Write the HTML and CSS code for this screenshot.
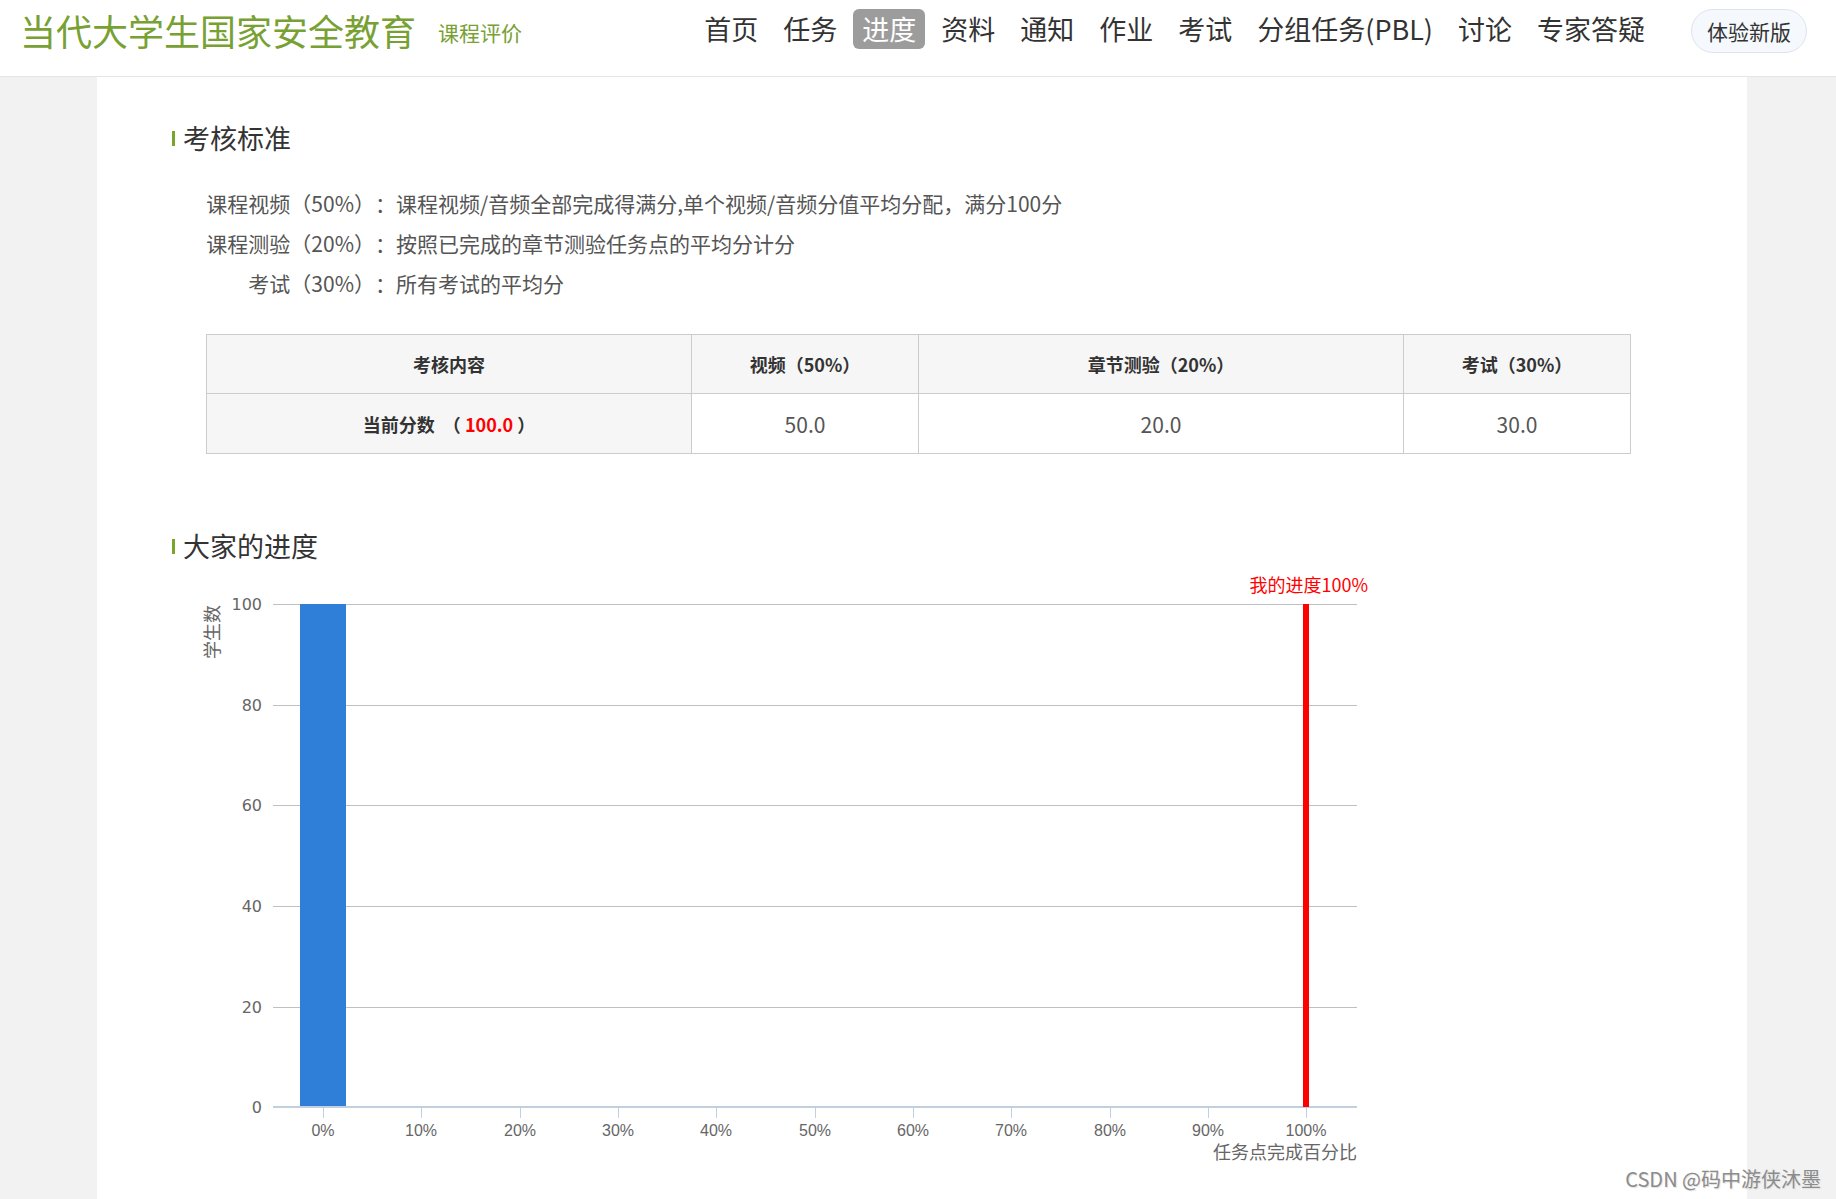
FILE: index.html
```html
<!DOCTYPE html>
<html lang="zh-CN">
<head>
<meta charset="utf-8">
<title>课程评价 - 进度</title>
<link rel="stylesheet" href="styles.css">
</head>
<body>
<header class="topbar">
  <div class="brand">
    <span class="brand-title">当代大学生国家安全教育</span>
    <span class="brand-sub">课程评价</span>
  </div>
  <nav class="nav">
    <a class="nav-item">首页</a>
    <a class="nav-item">任务</a>
    <a class="nav-item active">进度</a>
    <a class="nav-item">资料</a>
    <a class="nav-item">通知</a>
    <a class="nav-item">作业</a>
    <a class="nav-item">考试</a>
    <a class="nav-item">分组任务(PBL)</a>
    <a class="nav-item">讨论</a>
    <a class="nav-item">专家答疑</a>
  </nav>
  <a class="new-btn">体验新版</a>
</header>

<main class="page">
  <section class="block">
    <h2 class="block-title">考核标准</h2>
    <div class="block-body">
      <div class="rules">
        <div class="rule"><span class="rule-label">课程视频（50%）：</span><span class="rule-text">课程视频/音频全部完成得满分,单个视频/音频分值平均分配，满分100分</span></div>
        <div class="rule"><span class="rule-label">课程测验（20%）：</span><span class="rule-text">按照已完成的章节测验任务点的平均分计分</span></div>
        <div class="rule"><span class="rule-label">考试（30%）：</span><span class="rule-text">所有考试的平均分</span></div>
      </div>
      <table class="score">
        <colgroup>
          <col class="col-wide">
          <col class="col-narrow">
          <col class="col-wide">
          <col class="col-narrow">
        </colgroup>
        <thead>
          <tr>
            <th>考核内容</th>
            <th>视频（50%）</th>
            <th>章节测验（20%）</th>
            <th>考试（30%）</th>
          </tr>
        </thead>
        <tbody>
          <tr>
            <td class="row-head">当前分数 &nbsp;（ <span class="total">100.0</span> ）</td>
            <td>50.0</td>
            <td>20.0</td>
            <td>30.0</td>
          </tr>
        </tbody>
      </table>
    </div>
  </section>

  <section class="block block-chart">
    <h2 class="block-title">大家的进度</h2>
    <svg class="chart" width="1220" height="625" viewBox="0 0 1220 625" xmlns="http://www.w3.org/2000/svg">
      <g class="grid">
        <line x1="101" x2="1185" y1="38.5" y2="38.5"/>
        <line x1="101" x2="1185" y1="139.5" y2="139.5"/>
        <line x1="101" x2="1185" y1="239.5" y2="239.5"/>
        <line x1="101" x2="1185" y1="340.5" y2="340.5"/>
        <line x1="101" x2="1185" y1="441.5" y2="441.5"/>
      </g>
      <g class="ylabels">
        <text x="90" y="44">100</text>
        <text x="90" y="145">80</text>
        <text x="90" y="245">60</text>
        <text x="90" y="346">40</text>
        <text x="90" y="447">20</text>
        <text x="90" y="547">0</text>
      </g>
      <text class="axis-title" transform="translate(39,66) rotate(-90)">学生数</text>
      <rect class="bar" x="128" y="38" width="46" height="503"/>
      <line class="xaxis" x1="101" x2="1185" y1="541" y2="541"/>
      <g class="ticks">
        <line x1="151.5" x2="151.5" y1="542" y2="552"/>
        <line x1="249.5" x2="249.5" y1="542" y2="552"/>
        <line x1="348.5" x2="348.5" y1="542" y2="552"/>
        <line x1="446.5" x2="446.5" y1="542" y2="552"/>
        <line x1="544.5" x2="544.5" y1="542" y2="552"/>
        <line x1="643.5" x2="643.5" y1="542" y2="552"/>
        <line x1="741.5" x2="741.5" y1="542" y2="552"/>
        <line x1="839.5" x2="839.5" y1="542" y2="552"/>
        <line x1="938.5" x2="938.5" y1="542" y2="552"/>
        <line x1="1036.5" x2="1036.5" y1="542" y2="552"/>
        <line x1="1134.5" x2="1134.5" y1="542" y2="552"/>
      </g>
      <g class="xlabels">
        <text x="151" y="570">0%</text>
        <text x="249" y="570">10%</text>
        <text x="348" y="570">20%</text>
        <text x="446" y="570">30%</text>
        <text x="544" y="570">40%</text>
        <text x="643" y="570">50%</text>
        <text x="741" y="570">60%</text>
        <text x="839" y="570">70%</text>
        <text x="938" y="570">80%</text>
        <text x="1036" y="570">90%</text>
        <text x="1134" y="570">100%</text>
      </g>
      <text class="x-title" x="1185" y="593">任务点完成百分比</text>
      <rect class="mine" x="1131" y="38" width="6" height="503"/>
      <text class="mine-label" x="1196" y="26">我的进度100%</text>
    </svg>
  </section>
</main>

<div class="watermark">CSDN @码中游侠沐墨</div>
</body>
</html>
```

FILE: styles.css
```css
* {
  box-sizing: border-box;
}

html,
body {
  margin: 0;
  padding: 0;
}

body {
  position: relative;
  min-height: 1199px;
  background: #f2f2f2;
  font-family: "Noto Sans CJK SC", "Noto Sans", sans-serif;
  color: #333;
  text-spacing-trim: space-all;
}

a {
  text-decoration: none;
  cursor: pointer;
}

/* ---------- header ---------- */
.topbar {
  display: flex;
  align-items: flex-start;
  height: 77px;
  padding: 9px 29px 0 20px;
  background: #fff;
  border-bottom: 1px solid #e6e6e6;
}

.brand {
  display: flex;
  align-items: center;
  white-space: nowrap;
}

.brand-title {
  font-size: 36px;
  line-height: 42px;
  color: #78a133;
}

.brand-sub {
  margin: 4px 0 0 22px;
  font-size: 21px;
  line-height: 30px;
  color: #78a133;
}

.nav {
  display: flex;
  gap: 7px;
  margin-left: auto;
  white-space: nowrap;
}

.nav-item {
  padding: 0 9px;
  font-size: 27px;
  line-height: 40px;
  color: #333;
  border-radius: 6px;
}

.nav-item.active {
  background: #9c9c9c;
  color: #fff;
}

.new-btn {
  margin-left: 37px;
  height: 44px;
  padding: 0 15px;
  font-size: 21px;
  line-height: 42px;
  color: #333;
  background: #f5f8fc;
  border: 1px solid #dde4ee;
  border-radius: 22px;
  white-space: nowrap;
}

/* ---------- page ---------- */
.page {
  width: 1650px;
  min-height: 1122px;
  margin-left: 97px;
  padding: 41px 0 0 75px;
  background: #fff;
}

.block-title {
  display: flex;
  align-items: center;
  margin: 0;
  font-size: 27px;
  line-height: 40px;
  font-weight: normal;
  color: #333;
}

.block-title::before {
  content: "";
  width: 3px;
  height: 15px;
  margin-right: 8px;
  background: #7aa52c;
}

.block-body {
  padding-left: 34px;
}

.rules {
  margin-top: 25px;
  font-size: 21px;
  line-height: 40px;
  color: #555;
}

.rule {
  display: flex;
}

.rule-label {
  flex: none;
  width: 190px;
  text-align: right;
}

/* ---------- score table ---------- */
.score {
  width: 1424px;
  margin-top: 31px;
  border-collapse: collapse;
  table-layout: fixed;
}

.col-wide {
  width: 485px;
}

.col-narrow {
  width: 227px;
}

.score th,
.score td {
  padding: 0;
  border: 1px solid #cccccc;
  text-align: center;
}

.score th {
  height: 59px;
  background: #f6f6f6;
  font-size: 18px;
  font-weight: bold;
  color: #333;
}

.score td {
  height: 60px;
  font-size: 21px;
  color: #555;
}

.score td.row-head {
  background: #f6f6f6;
  font-size: 18px;
  font-weight: bold;
  color: #333;
}

.score .total {
  color: #ff0000;
}

/* ---------- chart ---------- */
.block-chart {
  margin-top: 72px;
}

.chart {
  display: block;
}

.grid line {
  stroke: #c0c0c0;
  stroke-width: 1;
}

.ylabels text {
  font-family: "DejaVu Sans", sans-serif;
  font-size: 16px;
  fill: #666;
  text-anchor: end;
}

.axis-title {
  font-family: "Noto Sans CJK SC", sans-serif;
  font-size: 18px;
  fill: #666;
  text-anchor: middle;
  dominant-baseline: central;
}

.bar {
  fill: #2f7ed8;
}

.xaxis {
  stroke: #c0d0e0;
  stroke-width: 2;
}

.ticks line {
  stroke: #c0d0e0;
  stroke-width: 1;
}

.xlabels text {
  font-family: "Liberation Sans Narrow", "Liberation Sans", sans-serif;
  font-size: 16px;
  fill: #666;
  text-anchor: middle;
}

.x-title {
  font-family: "Noto Sans CJK SC", sans-serif;
  font-size: 18px;
  fill: #666;
  text-anchor: end;
}

.mine {
  fill: #ff0000;
}

.mine-label {
  font-family: "Noto Sans CJK SC", sans-serif;
  font-size: 18px;
  fill: #ff0000;
  text-anchor: end;
}

/* ---------- watermark ---------- */
.watermark {
  position: absolute;
  right: 15px;
  bottom: 6px;
  font-family: "Noto Sans CJK SC", sans-serif;
  font-size: 20px;
  color: #8c8c8c;
  text-shadow: 1px 1px 1px #e0e0e0;
}
```
